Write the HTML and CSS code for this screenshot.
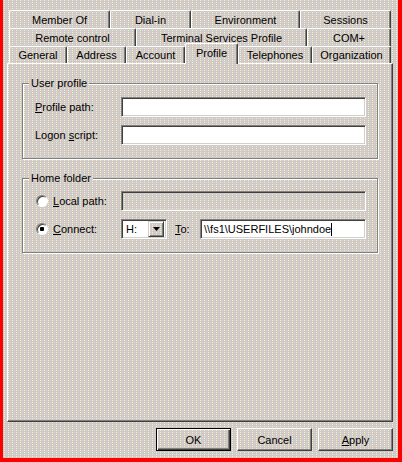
FILE: index.html
```html
<!doctype html>
<html lang="en">
<head>
    <meta charset="UTF-8">
    <title>Profile Properties</title>
    <link rel="stylesheet" href="styles.css">
</head>
<body>
    <div class="dialog">
        <div class="tabs">
            <div class="tab-row row-1">
                <div class="tab">Member Of</div>
                <div class="tab">Dial-in</div>
                <div class="tab">Environment</div>
                <div class="tab">Sessions</div>
            </div>
            <div class="tab-row row-2">
                <div class="tab">Remote control</div>
                <div class="tab">Terminal Services Profile</div>
                <div class="tab">COM+</div>
            </div>
            <div class="tab-row row-3">
                <div class="tab">General</div>
                <div class="tab">Address</div>
                <div class="tab">Account</div>
                <div class="tab tab-active">Profile</div>
                <div class="tab">Telephones</div>
                <div class="tab">Organization</div>
            </div>
        </div>

        <div class="panel">
            <fieldset class="group">
                <legend>User profile</legend>
                <div class="field-row">
                    <label><u>P</u>rofile path:</label>
                    <div class="textbox"></div>
                </div>
                <div class="field-row">
                    <label>Logon <u>s</u>cript:</label>
                    <div class="textbox"></div>
                </div>
            </fieldset>

            <fieldset class="group group-home">
                <legend>Home folder</legend>
                <div class="field-row">
                    <label class="option"><span class="radio"></span><span><u>L</u>ocal path:</span></label>
                    <div class="textbox textbox-disabled"></div>
                </div>
                <div class="field-row">
                    <label class="option"><span class="radio radio-checked"></span><span><u>C</u>onnect:</span></label>
                    <div class="connect">
                        <div class="textbox combo">
                            <span class="combo-value">H:</span>
                            <span class="combo-btn">
                                <svg width="7" height="4" viewBox="0 0 7 4"><polygon points="0,0 7,0 3.5,4" fill="#000"/></svg>
                            </span>
                        </div>
                        <label class="to-label"><u>T</u>o:</label>
                        <div class="textbox path-box">\\fs1\USERFILES\johndoe<span class="caret"></span></div>
                    </div>
                </div>
            </fieldset>
        </div>

        <div class="buttons">
            <button class="btn btn-default">OK</button>
            <button class="btn">Cancel</button>
            <button class="btn"><u>A</u>pply</button>
        </div>
    </div>
</body>
</html>
```

FILE: styles.css
```css
body {
    margin: 0;
    padding: 0;
    font-family: "Liberation Sans", Arial, sans-serif;
    font-size: 11px;
    color: #000;
}

/* dithered 3D face colour, aligned to the viewport so every piece matches */
.dialog,
.tab-active,
.group legend,
.combo-btn {
    background:
        linear-gradient(transparent 1px, #cccac6 1px) 0 0 / 4px 2px,
        linear-gradient(90deg, #f4f0c8 1px, #cccac6 1px 2px, #ecc8d0 2px 3px, #cccac6 3px) 0 0 / 4px 2px;
    background-attachment: fixed;
}

.dialog {
    width: 402px;
    height: 462px;
    box-sizing: border-box;
    border-left: 3px solid #f00;
    border-right: 4px solid #f00;
    border-bottom: 4px solid #f00;
    padding: 10px 5px 0 4px;
}

.tabs {
    margin: 0 2px;
}

.tab-row {
    display: grid;
    height: 18px;
}

.row-1 {
    grid-template-columns: 101px 81px 109px 1fr;
}

.row-2 {
    grid-template-columns: 127px 171px 1fr;
}

.row-3 {
    height: 17px;
    grid-template-columns: 58px 59px 59px 53px 74px 1fr;
}

.tab {
    display: flex;
    align-items: center;
    justify-content: center;
    border-top: 1px solid #fff;
    border-left: 1px solid #fff;
    border-right: 1px solid #404040;
    border-radius: 2px 2px 0 0;
    box-shadow: inset -1px 0 #808080;
    white-space: nowrap;
}

.tab-active {
    position: relative;
    z-index: 1;
    margin: -3px 0 -1px;
    padding-bottom: 2px;
}

.panel {
    height: 359px;
    box-sizing: border-box;
    border-top: 1px solid #fff;
    border-left: 1px solid #fff;
    border-right: 1px solid #404040;
    border-bottom: 1px solid #404040;
    box-shadow: inset -1px -1px #808080;
    padding: 13px 14px 0 14px;
}

.group {
    margin: 0;
    min-width: 0;
    padding: 7px 11px 13px 12px;
    border: 1px solid #808080;
    box-shadow: inset 1px 1px #fff, 1px 1px #fff;
    display: flex;
    flex-direction: column;
    gap: 8px;
}

.group legend {
    margin-left: -6px;
    padding: 0 2px;
    line-height: 13px;
}

.group-home {
    margin-top: 13px;
    padding-top: 6px;
}

.field-row {
    display: grid;
    grid-template-columns: 86px 1fr;
    align-items: center;
}

.option {
    display: flex;
    align-items: center;
    gap: 5px;
    margin-left: 1px;
}

.radio {
    width: 12px;
    height: 12px;
    box-sizing: border-box;
    border-radius: 50%;
    background: #fff;
    border: 1px solid;
    border-color: #808080 #fff #fff #808080;
    box-shadow: inset 1px 1px #404040;
}

.radio-checked {
    background: radial-gradient(circle, #000 2px, #fff 2.5px);
}

.textbox {
    height: 20px;
    box-sizing: border-box;
    background: #fff;
    border: 1px solid;
    border-color: #808080 #fff #fff #808080;
    box-shadow: inset 1px 1px #404040, inset -1px -1px #d4d0c8;
    padding: 0 3px;
    display: flex;
    align-items: center;
    white-space: nowrap;
}

.textbox-disabled {
    background: transparent;
}

.connect {
    display: flex;
    align-items: center;
}

.combo {
    width: 46px;
    padding: 2px 2px 2px 4px;
    justify-content: space-between;
}

.combo-btn {
    width: 16px;
    height: 16px;
    box-sizing: border-box;
    border: 1px solid;
    border-color: #d4d0c8 #404040 #404040 #d4d0c8;
    box-shadow: inset 1px 1px #fff, inset -1px -1px #808080;
    display: flex;
    align-items: center;
    justify-content: center;
}

.to-label {
    margin: 0 8px 0 8px;
    width: 17px;
}

.path-box {
    flex: 1;
}

.caret {
    display: inline-block;
    width: 1px;
    height: 13px;
    background: #000;
}

.buttons {
    display: flex;
    justify-content: flex-end;
    gap: 6px;
    margin-top: 6px;
}

.btn {
    width: 75px;
    height: 23px;
    box-sizing: border-box;
    margin: 0;
    padding: 0;
    font: inherit;
    color: #000;
    background: transparent;
    border: 1px solid;
    border-color: #fff #404040 #404040 #fff;
    box-shadow: inset -1px -1px #808080;
}

.btn-default {
    border-color: #000;
    box-shadow: inset 1px 1px #fff, inset -1px -1px #404040, inset -2px -2px #808080;
}
```
